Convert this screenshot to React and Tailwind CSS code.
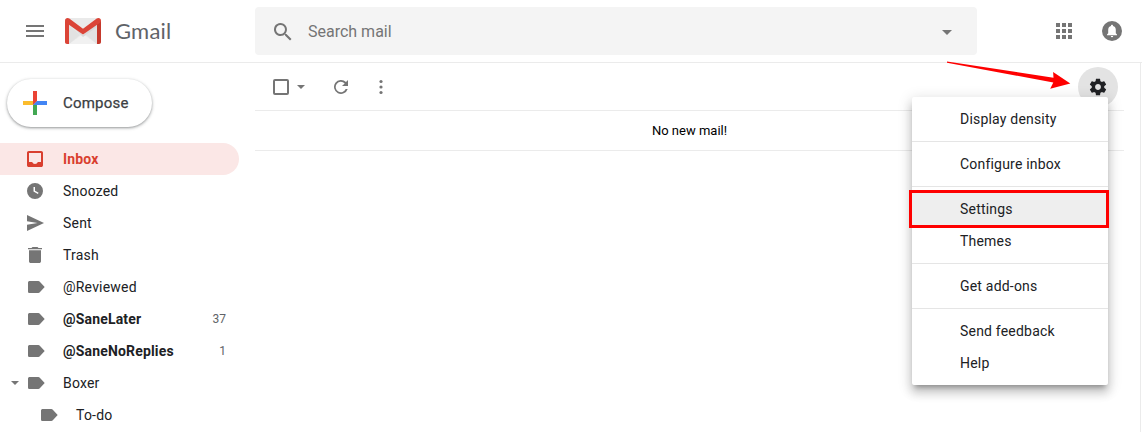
import { Fragment } from "react";

const folders = [
  { name: "Inbox", icon: "inbox", active: true },
  { name: "Snoozed", icon: "clock" },
  { name: "Sent", icon: "send" },
  { name: "Trash", icon: "trash" },
  { name: "@Reviewed", icon: "label" },
  { name: "@SaneLater", icon: "label", unread: 37 },
  { name: "@SaneNoReplies", icon: "label", unread: 1 },
  { name: "Boxer", icon: "label", expandable: true },
  { name: "To-do", icon: "label", nested: true },
];

const menuGroups = [
  ["Display density"],
  ["Configure inbox"],
  ["Settings", "Themes"],
  ["Get add-ons"],
  ["Send feedback", "Help"],
];

// 20px sidebar icons
const iconPaths = {
  inbox:
    "M16.2 2H3.8C2.8 2 2 2.8 2 3.8v12.4c0 1 .8 1.8 1.8 1.8h12.4c1 0 1.8-.8 1.8-1.8V3.8c0-1-.8-1.8-1.8-1.8zM16 13h-3.2c-.4 1.200-1.500 2-2.800 2s-2.400-.8-2.800-2H4V4h12v9z",
  clock:
    "M10 2a8 8 0 1 0 0 16 8 8 0 0 0 0-16zm2.900 11L8.500 10.600V6H10v3.800l3.600 2z",
  send: "M2 18l17-8L2 2v6.200L12.500 10 2 11.800z",
  trash:
    "M4 16.200c0 1 .8 1.800 1.800 1.800h8.400c1 0 1.800-.8 1.800-1.800V5.200H4v11zM17 3h-3.500l-1-1h-5l-1 1H3v1.300h14V3z",
  label:
    "M14.800 4.800c-.3-.5-.9-.8-1.500-.8H4.700C3.700 4 3 4.700 3 5.600v8.800c0 .9.700 1.600 1.700 1.600h8.600c.6 0 1.200-.3 1.500-.8L19.700 10l-4.900-5.200z",
};

function FolderIcon({ name }) {
  return (
    <svg viewBox="0 0 20 20" className="size-5 shrink-0" fill="currentColor">
      <path d={iconPaths[name]} />
    </svg>
  );
}

function GmailLogo() {
  return (
    <svg viewBox="0 0 36 26" className="h-[26px] w-9">
      <path d="M2 0h32v26H2z" fill="#e9e9e9" />
      <path d="M4 26l14-10 14 10z" fill="#f1f1f1" />
      <path d="M4 7v19l11-9zM32 8v18L21 17z" fill="#e2e2e2" />
      <path d="M4 5l14 12L32 5v4L18 19z" fill="#d9d9d9" />
      <path d="M3 0h30L18 11z" fill="#eaeaea" />
      <path d="M0 2.500V24c0 1.200.8 2 2 2h2V6z" fill="#db4437" />
      <path d="M36 2.500V24c0 1.200-.8 2-2 2h-2V6z" fill="#c5392c" />
      <path d="M0 2.600C0 .9 1.200 0 2.500 0c.8 0 1.200.2 1.800.6L18 10.800 31.700.6c.6-.4 1-.6 1.800-.6C34.800 0 36 .9 36 2.600c0 .9-.5 1.700-1.400 2.400L18 16.500 1.400 5C.5 4.300 0 3.500 0 2.600z" fill="#db4437" />
    </svg>
  );
}

function Header() {
  return (
    <header className="flex h-[63px] shrink-0 items-center border-b border-[#ebebeb] pb-px text-[#757575]">
      <div className="flex w-[255px] items-center pl-[26px]">
        <div className="flex w-[18px] flex-col gap-[3px]">
          <div className="h-0.5 bg-[#757575]" />
          <div className="h-0.5 bg-[#757575]" />
          <div className="h-0.5 bg-[#757575]" />
        </div>
        <div className="ml-[21px]">
          <GmailLogo />
        </div>
        <span className="ml-3.5 font-['Lato',sans-serif] text-[22px] leading-none tracking-[0.2px] text-[#5f6368]">
          Gmail
        </span>
      </div>
      <div className="flex h-12 w-[722px] items-center rounded bg-[#f4f4f4] pl-4">
        <svg viewBox="0 0 24 24" className="mt-0.5 size-6" fill="currentColor">
          <path d="M15.500 14h-.8l-.3-.3A6.500 6.500 0 1 0 13.700 14.400l.3.300v.8l5 5 1.500-1.500-5-5zm-6 0a4.500 4.500 0 1 1 0-9 4.500 4.500 0 0 1 0 9z" />
        </svg>
        <span className="mt-0.5 ml-[13px] text-base">Search mail</span>
        <svg viewBox="0 0 10 5" className="mt-[3px] mr-[25px] ml-auto h-[5px] w-2.5" fill="currentColor">
          <path d="M0 0h10L5 5z" />
        </svg>
      </div>
      <div className="ml-[79px] grid grid-cols-3 gap-0.5">
        {Array.from({ length: 9 }, (_, i) => (
          <div key={i} className="size-1 bg-[#757575]" />
        ))}
      </div>
      <svg viewBox="0 0 20 20" className="ml-[30px] size-5">
        <circle cx="10" cy="10" r="10" fill="#757575" />
        <path
          d="M10 3.700c-.6 0-1 .4-1 1v.4C7.200 5.500 6.200 7 6.200 8.800v3.400L5 13.400v.8h10v-.8l-1.200-1.200V8.800c0-1.800-1-3.300-2.800-3.700v-.4c0-.6-.4-1-1-1zM8.800 15a1.200 1.200 0 0 0 2.400 0z"
          fill="#fff"
        />
      </svg>
    </header>
  );
}

function ComposeButton() {
  return (
    <button className="mt-4 mb-4 ml-[7px] flex h-12 w-[145px] items-center rounded-full bg-white pl-4 shadow-[0_1px_2px_0_rgba(60,64,67,0.35),0_1px_3px_1px_rgba(60,64,67,0.18)]">
      <svg viewBox="0 0 24 24" className="size-6">
        <path d="M10 0h4v10l-4 4z" fill="#ea4335" />
        <path d="M0 10h14l-4 4H0z" fill="#fbbc2d" />
        <path d="M10 0h4v10l-4 4z" fill="#ea4335" />
        <path d="M10 14h4v10h-4z" fill="#43a853" />
        <path d="M14 10h10v4H10z" fill="#4285f4" />
      </svg>
      <span className="ml-4 text-[15px] tracking-[0.2px] text-[#3c4043] [-webkit-text-stroke:0.25px_#3c4043]">
        Compose
      </span>
    </button>
  );
}

function Folder({ folder }) {
  const bold = folder.active || folder.unread;
  return (
    <div
      className={`flex h-8 w-[239px] items-center rounded-r-full pr-[13px] ${
        folder.active ? "bg-[#fbe7e6] text-[#d93f2f]" : "text-[#757575]"
      } ${folder.nested ? "pl-[38px]" : "pl-[25px]"}`}
    >
      {folder.expandable && (
        <svg viewBox="0 0 8 4" className="-ml-3.5 mr-1.5 h-1 w-2" fill="currentColor">
          <path d="M0 0h8L4 4z" />
        </svg>
      )}
      <FolderIcon name={folder.icon} />
      <span
        className={`ml-[18px] text-sm ${bold ? "font-bold tracking-[0.17px]" : "tracking-[0.2px]"} ${
          folder.active ? "" : "text-[#202124]"
        }`}
      >
        {folder.name}
      </span>
      {folder.unread && (
        <span className="ml-auto text-xs text-[#5f6368]">{folder.unread}</span>
      )}
    </div>
  );
}

function Toolbar() {
  return (
    <div className="flex h-12 items-center border-b border-[#ebebeb] pt-px pl-[18px] text-[#757575]">
      <div className="size-4 rounded-[2px] border-2 border-[#757575]" />
      <svg viewBox="0 0 8 4" className="ml-2 h-1 w-2" fill="currentColor">
        <path d="M0 0h8L4 4z" />
      </svg>
      <svg viewBox="0 0 20 20" className="ml-[26px] size-5" fill="currentColor">
        <path d="M15 5A7 7 0 1 0 16.700 12h-2A5.200 5.200 0 1 1 13.700 6.400L11 9h6V3z" />
      </svg>
      <svg viewBox="0 0 20 20" className="ml-5 size-5" fill="currentColor">
        <circle cx="10" cy="4.500" r="1.600" />
        <circle cx="10" cy="10" r="1.600" />
        <circle cx="10" cy="15.500" r="1.600" />
      </svg>
      <div className="mr-1.5 ml-auto flex size-10 shrink-0 items-center justify-center rounded-full bg-[#e3e3e3] text-[#202124]">
        <svg viewBox="0 0 24 24" className="size-5" fill="currentColor">
          <path d="M19.430 12.980c.04-.32.07-.64.07-.98s-.03-.66-.07-.98l2.110-1.650c.19-.15.24-.42.12-.64l-2-3.460c-.12-.22-.39-.3-.61-.22l-2.490 1c-.52-.4-1.080-.73-1.690-.98l-.38-2.650C14.460 2.180 14.250 2 14 2h-4c-.25 0-.46.18-.49.42l-.38 2.650c-.61.25-1.170.59-1.690.98l-2.490-1c-.23-.09-.49 0-.61.22l-2 3.460c-.13.22-.07.49.12.64l2.110 1.650c-.04.32-.07.65-.07.98s.03.66.07.98l-2.110 1.650c-.19.15-.24.42-.12.64l2 3.460c.12.22.39.3.61.22l2.490-1c.52.4 1.080.73 1.690.98l.38 2.650c.03.24.24.42.49.42h4c.25 0 .46-.18.49-.42l.38-2.650c.61-.25 1.170-.59 1.690-.98l2.490 1c.23.09.49 0 .61-.22l2-3.460c.12-.22.07-.49-.12-.64l-2.110-1.650zM12 15.500c-1.930 0-3.500-1.570-3.500-3.500s1.570-3.500 3.500-3.500 3.500 1.570 3.500 3.500-1.570 3.500-3.500 3.500z" />
        </svg>
      </div>
    </div>
  );
}

function SettingsMenu() {
  return (
    <div className="absolute top-[97px] left-[912px] w-[196px] rounded-[2px] bg-white py-1.5 text-sm tracking-[0.2px] text-[#202124] shadow-[0_8px_10px_1px_rgba(0,0,0,0.14),0_3px_14px_2px_rgba(0,0,0,0.12),0_5px_5px_-3px_rgba(0,0,0,0.3)]">
      {menuGroups.map((group, i) => (
        <Fragment key={group[0]}>
          {i > 0 && <div className="my-1.5 h-px bg-[#e5e5e5]" />}
          {group.map((item) => (
            <div
              key={item}
              className={`relative flex h-8 items-center pl-12 ${
                item === "Settings" ? "bg-[#eeeeee]" : ""
              }`}
            >
              {item}
              {item === "Settings" && (
                <div className="absolute -top-[3px] -left-[3px] h-[38px] w-[200px] border-3 border-[#fe0000]" />
              )}
            </div>
          ))}
        </Fragment>
      ))}
    </div>
  );
}

export default function App() {
  return (
    <div className="relative flex h-[432px] w-[1142px] flex-col overflow-hidden bg-white font-['Roboto',sans-serif]">
      <Header />
      <div className="flex min-h-0 flex-1">
        <nav className="w-[255px] shrink-0">
          <ComposeButton />
          {folders.map((folder) => (
            <Folder key={folder.name} folder={folder} />
          ))}
        </nav>
        <main className="w-[869px]">
          <Toolbar />
          <div className="flex h-10 items-center justify-center border-b border-[#ebebeb] text-[13px] text-black">
            No new mail!
          </div>
        </main>
        <div className="ml-4 w-px bg-[#ebebeb]" />
      </div>
      <SettingsMenu />
      {/* arrow pointing at the gear */}
      <svg viewBox="0 0 126 30" className="absolute top-[60px] left-[946px] h-[30px] w-[126px]">
        <path d="M1 1.400L107.500 17.700l-.4-5.700L124.300 23.400 104.200 28.800l3.100-6.400L1 2.800z" fill="#fe0000" />
      </svg>
    </div>
  );
}
